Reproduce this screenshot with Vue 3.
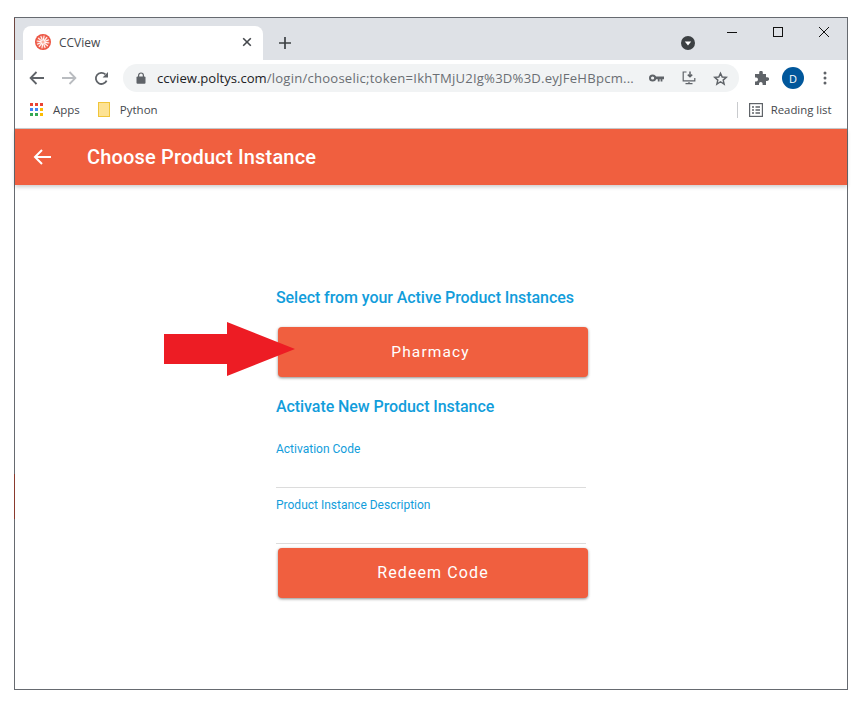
<script setup>
const apps = ['#ea4335','#ea4335','#ea4335','#4285f4','#4285f4','#fbbc04','#34a853','#34a853','#fbbc04']
const rays = [0,30,60,90,120,150,180,210,240,270,300,330]
</script>

<template>
  <div class="window">
    <i class="edge edge-top"></i>
    <i class="edge edge-low"></i>
    <div class="tabstrip">
      <div class="tab">
        <svg class="favicon" width="16" height="16" viewBox="0 0 16 16">
          <defs>
            <radialGradient id="fav"><stop offset="0" stop-color="#ffb8a8"/><stop offset="1" stop-color="#ea4a38"/></radialGradient>
          </defs>
          <circle cx="8" cy="8" r="8" fill="url(#fav)"/>
          <path v-for="r in rays" :key="r" d="M8 6.5V1.6" stroke="#fff" stroke-width="1" :transform="`rotate(${r + 10} 8 8)`"/>
        </svg>
        <span class="tab-title">CCView</span>
        <svg class="tab-close" width="10" height="10" viewBox="0 0 10 10"><path d="M1.2 1.2l7.6 7.6M8.8 1.2L1.2 8.8" stroke="#45484d" stroke-width="1.6"/></svg>
      </div>
      <svg class="newtab" width="12" height="12" viewBox="0 0 12 12"><path d="M6 0v12M0 6h12" stroke="#3c4043" stroke-width="1.7"/></svg>
      <svg class="tabsearch" width="14" height="14" viewBox="0 0 14 14"><circle cx="7" cy="7" r="7" fill="#3c4043"/><path d="M3.8 5.4h6.4L7 9.4z" fill="#fff"/></svg>
      <div class="winctl">
        <svg width="12" height="12" viewBox="0 0 12 12"><path d="M1 6.5h10" stroke="#111" stroke-width="1"/></svg>
        <svg width="12" height="12" viewBox="0 0 12 12"><rect x="1.5" y="1.5" width="9" height="9" fill="none" stroke="#111"/></svg>
        <svg width="12" height="12" viewBox="0 0 12 12"><path d="M1 1l10 10M11 1L1 11" stroke="#111"/></svg>
      </div>
    </div>

    <div class="toolbar">
      <svg width="16" height="14" viewBox="0 0 16 14"><path d="M15 7H2M7.5 1L1.6 7l5.9 6" fill="none" stroke="#5f6368" stroke-width="1.8"/></svg>
      <svg class="fwd" width="16" height="14" viewBox="0 0 16 14"><path d="M1 7h13M8.5 1l5.9 6-5.9 6" fill="none" stroke="#b9bcc0" stroke-width="1.8"/></svg>
      <svg class="reload" width="15" height="15" viewBox="0 0 15 15"><path d="M12.6 9.6A5.6 5.6 0 1 1 11.4 3.4" fill="none" stroke="#5f6368" stroke-width="1.8"/><path d="M14 1v5.4H8.6z" fill="#5f6368"/></svg>
      <div class="omnibox">
        <svg class="lock" width="10" height="12" viewBox="0 0 10 12"><path d="M2.6 5V3.4a2.4 2.4 0 0 1 4.8 0V5" fill="none" stroke="#5f6368" stroke-width="1.2"/><rect x="0.5" y="4.6" width="9" height="7.2" rx="1" fill="#5f6368"/></svg>
        <span class="url"><span class="url-host">ccview.poltys.com</span><span class="url-path">/login/chooselic;token=IkhTMjU2Ig%3D%3D.eyJFeHBpcm...</span></span>
        <svg class="omni-key" width="15" height="8" viewBox="0 0 15 8"><circle cx="3.6" cy="4" r="2.6" fill="none" stroke="#5f6368" stroke-width="2"/><path d="M6 2.6h9v2.6h-1.6V7.4h-1.8V5.2h-1v2.2H8.8V5.2H6z" fill="#5f6368"/></svg>
        <svg class="omni-install" width="14" height="14" viewBox="0 0 14 14"><path d="M4.5 1H1.2v8.8h11.6V7M3.5 12.6h7M7 11v1.6" fill="none" stroke="#5f6368" stroke-width="1.2"/><path d="M8 .5v4.8M5.8 3.6L8 5.8l2.2-2.2" fill="none" stroke="#5f6368" stroke-width="1.5"/></svg>
        <svg class="omni-star" width="15" height="15" viewBox="0 0 24 24"><path d="M12 3.5l2.7 6.1 6.6.6-5 4.4 1.5 6.5L12 17.2l-5.8 3.9 1.5-6.5-5-4.4 6.6-.6z" fill="none" stroke="#5f6368" stroke-width="2.3"/></svg>
      </div>
      <svg class="puzzle" width="15" height="15" viewBox="0 0 15 15"><path d="M5.2 1.6a1.8 1.8 0 0 1 3.6 0V3H12v3.2h1.2a1.9 1.9 0 0 1 0 3.8H12v4H8.6v-1.2a1.8 1.8 0 0 0-3.6 0V14H1v-3.6h1.1a1.9 1.9 0 0 0 0-3.8H1V3h4.2z" fill="#5f6368"/></svg>
      <div class="avatar">D</div>
      <svg class="kebab" width="4" height="14" viewBox="0 0 4 14"><circle cx="2" cy="2" r="1.5" fill="#5f6368"/><circle cx="2" cy="7" r="1.5" fill="#5f6368"/><circle cx="2" cy="12" r="1.5" fill="#5f6368"/></svg>
    </div>

    <div class="bookmarks">
      <div class="apps-grid"><i v-for="(c, i) in apps" :key="i" :style="{ background: c }"></i></div>
      <span class="bm-text">Apps</span>
      <svg class="folder" width="12" height="15" viewBox="0 0 12 15"><rect x="0.5" y="0.5" width="11" height="14" fill="#fde293" stroke="#f0c53a"/></svg>
      <span class="bm-text python">Python</span>
      <div class="bm-sep"></div>
      <svg class="reading" width="14" height="14" viewBox="0 0 14 14"><rect x="0.6" y="0.6" width="12.8" height="12.8" fill="none" stroke="#5f6368" stroke-width="1.2"/><path d="M3 4h2M3 7h2M3 10h2M6.5 4H11M6.5 7H11M6.5 10H11" stroke="#5f6368" stroke-width="1.5"/></svg>
      <span class="bm-text reading-text">Reading list</span>
    </div>

    <header class="appbar">
      <svg class="appbar-back" width="18" height="16" viewBox="0 0 18 16"><path d="M18 8H2M9 1L2 8l7 7" fill="none" stroke="#fff" stroke-width="2"/></svg>
      <h1>Choose Product Instance</h1>
    </header>

    <main class="page">
      <div class="column">
        <h2 class="first">Select from your Active Product Instances</h2>
        <div class="pharmacy-row">
          <button class="btn pharmacy">Pharmacy</button>
          <svg class="arrow" width="131" height="54" viewBox="0 0 131 54"><path d="M0 12H63V0L131 27 63 54V42H0z" fill="#ed1c24"/></svg>
        </div>
        <h2 class="second">Activate New Product Instance</h2>
        <label class="field first-field">Activation Code</label>
        <label class="field">Product Instance Description</label>
        <button class="btn redeem">Redeem Code</button>
      </div>
    </main>
  </div>
</template>

<style scoped>
.window {
  position: relative;
  box-sizing: border-box;
  width: 834px;
  height: 673px;
  margin: 17px 0 0 14px;
  border: 1px solid #666a70;
  background: #fff;
  display: flex;
  flex-direction: column;
  font-family: "Open Sans", sans-serif;
}
.edge {
  position: absolute;
  left: -1px;
  width: 1px;
  background: #8a3a2e;
  z-index: 2;
}
.edge-top { top: 0; height: 42px; background: #6e4640; }
.edge-low { top: 456px; height: 45px; }
.tabstrip {
  flex: none;
  height: 42px;
  background: #dee1e6;
  display: flex;
  align-items: flex-end;
  position: relative;
}
.tab {
  box-sizing: border-box;
  width: 240px;
  height: 34px;
  margin-left: 8px;
  background: #fff;
  border-radius: 8px 8px 0 0;
  display: flex;
  align-items: center;
  padding: 0 0 2px 12px;
}
.favicon { flex: none; }
.tab-title {
  margin-left: 8px;
  font-size: 12px;
  color: #45484d;
  flex: 1;
}
.tab-close { margin-right: 11px; }
.newtab { margin: 0 0 11px 16px; }
.tabsearch { position: absolute; left: 666px; top: 18px; }
.winctl {
  position: absolute;
  right: 17px;
  top: 8px;
  display: flex;
  gap: 34px;
}
.toolbar {
  flex: none;
  height: 33px;
  display: flex;
  align-items: center;
  padding: 3px 0 0 14px;
  box-sizing: border-box;
  background: #fff;
}
.fwd { margin-left: 16px; }
.reload { margin-left: 17px; }
.omnibox {
  width: 616px;
  height: 28px;
  margin-left: 14px;
  border-radius: 14px;
  background: #f1f3f4;
  display: flex;
  align-items: center;
  padding-left: 13px;
  box-sizing: border-box;
}
.lock { flex: none; }
.url {
  margin-left: 11px;
  width: 481px;
  font-size: 13.1px;
  white-space: nowrap;
  overflow: hidden;
  color: #6a6e73;
}
.url-host { color: #202124; }
.url-path { letter-spacing: 0.22px; }
.omni-key { margin-left: 11px; flex: none; }
.omni-install { margin-left: 18px; flex: none; }
.omni-star { margin-left: 17px; flex: none; }
.puzzle { margin-left: 15px; flex: none; }
.avatar {
  margin-left: 13px;
  width: 22px;
  height: 22px;
  border-radius: 50%;
  background: #01579b;
  color: #fff;
  font-size: 11px;
  display: flex;
  align-items: center;
  justify-content: center;
  flex: none;
}
.kebab { margin-left: 19px; flex: none; }
.bookmarks {
  flex: none;
  height: 36px;
  display: flex;
  align-items: center;
  padding: 0 0 2px 15px;
  box-sizing: border-box;
  border-bottom: 1px solid #c9cbce;
}
.apps-grid {
  width: 13px;
  height: 13px;
  display: grid;
  grid-template-columns: repeat(3, 3px);
  grid-auto-rows: 3px;
  gap: 2px;
}
.bm-text {
  font-size: 11.5px;
  color: #45484d;
  margin-left: 10px;
}
.folder { margin-left: 18px; }
.python { margin-left: 10px; }
.bm-sep {
  width: 1px;
  height: 16px;
  background: #c9cbce;
  margin-left: 579px;
}
.reading { margin-left: 11px; }
.reading-text { margin-left: 8px; font-size: 11.4px; white-space: nowrap; }
.appbar {
  flex: none;
  height: 56px;
  background: #f05f3f;
  display: flex;
  align-items: center;
  padding-left: 18px;
  box-shadow: 0 2px 4px rgba(0, 0, 0, 0.2);
  position: relative;
}
.appbar h1 {
  margin: 0 0 0 36px;
  color: #fff;
  font: 500 20px/1 Roboto, sans-serif;
  letter-spacing: 0.18px;
}
.page {
  flex: 1;
  display: flex;
  padding-left: 261px;
  font-family: Roboto, sans-serif;
}
.column {
  width: 312px;
  display: flex;
  flex-direction: column;
}
h2 {
  margin: 0;
  color: #129ddb;
  font: 500 16px/20px Roboto, sans-serif;
  letter-spacing: -0.07px;
}
h2.first { margin-top: 103px; }
h2.second { margin-top: 20px; }
.pharmacy-row {
  position: relative;
  margin-top: 19px;
}
.arrow {
  position: absolute;
  left: -112px;
  top: -5px;
}
.btn {
  display: block;
  box-sizing: border-box;
  width: 310px;
  height: 50px;
  margin-left: 2px;
  border: 0;
  border-radius: 4px;
  background: #f05f3f;
  color: #fff;
  font-family: Roboto, sans-serif;
  font-size: 16px;
  font-weight: 400;
  letter-spacing: 1.1px;
  box-shadow: 0 1px 3px rgba(0, 0, 0, 0.45);
}
.pharmacy { font-size: 15.5px; padding-right: 11px; }
.redeem { margin-top: 4px; padding-bottom: 2px; }
.field {
  box-sizing: border-box;
  display: block;
  width: 310px;
  height: 56px;
  padding-top: 10px;
  font-size: 12px;
  line-height: 14px;
  color: #129ddb;
  border-bottom: 1px solid #dcdcdc;
}
.first-field { margin-top: 8px; height: 63px; padding-top: 17px; }
</style>

<style>
html, body { background: #fff; }
</style>
